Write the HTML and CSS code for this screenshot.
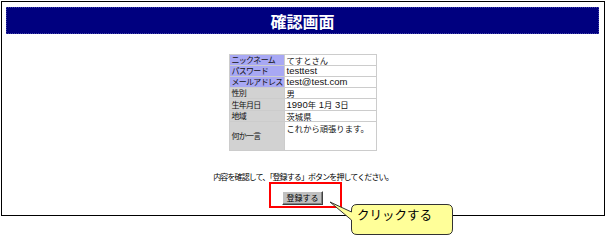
FILE: index.html
```html
<!DOCTYPE html>
<html lang="ja">
<head>
<meta charset="utf-8">
<title>確認画面</title>
<link rel="stylesheet" href="styles.css">
</head>
<body>
<div class="frame">
  <div class="header">確認画面</div>
  <table class="info">
    <tr><th class="blue">ニックネーム</th><td class="ja">てすとさん</td></tr>
    <tr><th class="blue">パスワード</th><td>testtest</td></tr>
    <tr><th class="blue">メールアドレス</th><td>test@test.com</td></tr>
    <tr><th>性別</th><td class="ja">男</td></tr>
    <tr><th>生年月日</th><td>1990<span class="j">年</span> 1<span class="j">月</span> 3<span class="j">日</span></td></tr>
    <tr><th>地域</th><td class="ja">茨城県</td></tr>
    <tr class="tall"><th>何か一言</th><td class="ja top">これから頑張ります。</td></tr>
  </table>
  <p class="note">内容を確認して、「登録する」ボタンを押してください。</p>
  <div class="actions"><button class="btn" type="button">登録する</button></div>
</div>
<div class="highlight"></div>
<div class="callout">
  <svg width="130" height="40" viewBox="0 0 130 40" aria-hidden="true">
    <path d="M30,5.5 H120 Q125.5,5.5 125.5,11 V30 Q125.5,35.5 120,35.5 H30 Q24.5,35.5 24.5,30 V21 L3,3 L24.5,13 V11 Q24.5,5.5 30,5.5 Z" fill="#ffff99" stroke="#333" stroke-width="1"/>
  </svg>
  <span class="callout-text">クリックする</span>
</div>
</body>
</html>
```
FILE: styles.css
```css
body {
  margin: 0;
  background: #fff;
  font-family: "Noto Sans CJK JP", sans-serif;
  color: #000;
}
.frame {
  box-sizing: border-box;
  width: 604px;
  height: 215px;
  margin: 1px 0 0 1px;
  border: 1px solid #000;
  display: flex;
  flex-direction: column;
}
.header {
  height: 27px;
  margin: 5px 5px 0 4px;
  background: #00007f;
  border: 1px dotted #4040a8;
  box-sizing: border-box;
  color: #fff;
  font-weight: bold;
  font-size: 16px;
  display: flex;
  align-items: center;
  justify-content: center;
  line-height: 1;
}
.info {
  margin: 20px auto 0;
  border-collapse: collapse;
  border: 1px solid #c8c8c8;
  font-size: 9.5px;
}
.info th, .info td {
  border: 1px solid #cccccc;
  padding: 0 1px;
  height: 10px;
  line-height: 10px;
  text-align: left;
  font-weight: normal;
  white-space: nowrap;
}
.info th {
  width: 47px;
  background: #d2d2d2;
  font-size: 8px;
  letter-spacing: -0.7px;
  color: #111;
}
.info th.blue {
  background: #a8a8f4;
}
.info td {
  width: 88px;
  padding-left: 2px;
  font-family: "Liberation Sans", "Noto Sans CJK JP", sans-serif;
  color: #111;
}
.info td.ja, .j {
  font-family: "Noto Sans CJK JP", sans-serif;
  font-size: 8.3px;
}
.info .tall th, .info .tall td {
  height: 27px;
}
.info td.top {
  vertical-align: top;
  padding-top: 1px;
}
.note {
  margin: 21px 0 0;
  text-align: center;
  font-size: 8px;
  letter-spacing: -0.9px;
  line-height: 10px;
}
.actions {
  margin-top: 9px;
  display: flex;
  justify-content: center;
}
.btn {
  box-sizing: border-box;
  width: 41px;
  height: 14px;
  padding: 0;
  margin-left: -1px;
  background: #c0c0c0;
  border: 1px solid;
  border-color: #fff #404040 #404040 #fff;
  box-shadow: inset -1px -1px 0 #808080;
  font-family: "Noto Sans CJK JP", sans-serif;
  font-size: 8px;
  line-height: 12px;
  color: #000;
}
.highlight {
  position: absolute;
  left: 269px;
  top: 182px;
  width: 73px;
  height: 26px;
  box-sizing: border-box;
  border: 2px solid #ff0000;
}
.callout {
  position: absolute;
  left: 327px;
  top: 199px;
  width: 130px;
  height: 40px;
}
.callout svg {
  display: block;
}
.callout-text {
  position: absolute;
  left: 30px;
  top: 8px;
  font-size: 12.5px;
  line-height: 16px;
  color: #000;
}
```
